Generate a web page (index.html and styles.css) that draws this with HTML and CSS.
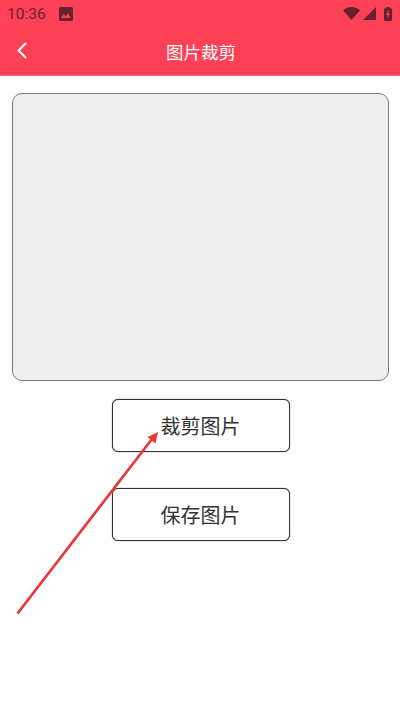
FILE: index.html
```html
<html>

<head>

	<title>图片裁剪</title>

	<link rel="stylesheet" href="styles.css">

</head>

<body>

	<div class="statusBar">
		<span class="clock">10:36</span>
		<svg class="picIcon" width="14" height="14" viewBox="0 0 14 14">
			<path fill="#66222e" d="M1.500 0h11A1.500 1.500 0 0 1 14 1.500v11a1.500 1.500 0 0 1-1.500 1.500h-11A1.500 1.500 0 0 1 0 12.500v-11A1.500 1.500 0 0 1 1.500 0z"/>
			<path fill="#ff4157" d="M2 11l2.800-4 2 2.200L9 6.300 12 11z"/>
		</svg>
		<span class="spacer"></span>
		<svg class="wifiIcon" width="17" height="13" viewBox="0 0 17 13">
			<path fill="#66222e" d="M0 3.400C2.200 1.300 5.100 0 8.500 0S14.800 1.300 17 3.400L8.500 13z"/>
		</svg>
		<svg class="signalIcon" width="13" height="13" viewBox="0 0 13 13">
			<path fill="#66222e" d="M13 0v13H0z"/>
		</svg>
		<svg class="batteryIcon" width="8" height="14" viewBox="0 0 8 14">
			<path fill="#66222e" d="M2.500 0h3v1.300H7a1 1 0 0 1 1 1V13a1 1 0 0 1-1 1H1a1 1 0 0 1-1-1V2.300a1 1 0 0 1 1-1h1.500z"/>
			<path fill="#ff4157" d="M4.600 2.800L2 8h1.700v3.400L6 6.400H4.400z"/>
		</svg>
	</div>

	<div class="titleBar">
		<svg class="backIcon" width="12" height="18" viewBox="0 0 12 18">
			<path fill="none" stroke="#ffffff" stroke-width="2" d="M10 2L2.500 9.500l7.500 7.500"/>
		</svg>
		<span class="title">图片裁剪</span>
	</div>

	<div class="content">
		<div class="preview"></div>
		<button class="btn cropBtn">裁剪图片</button>
		<button class="btn">保存图片</button>
	</div>

	<!-- arrow drawn over the page -->
	<svg class="arrow" width="400" height="711" viewBox="0 0 400 711">
		<line x1="17.500" y1="613.500" x2="152" y2="439" stroke="#e53838" stroke-width="2.700"/>
		<path fill="#e53838" d="M158 432l-2.500 11.500-8-6.500z"/>
	</svg>

</body>

</html>
```

FILE: styles.css
```css
body {
	margin: 0;
	width: 400px;
	height: 711px;
	overflow: hidden;
	position: relative;
	background-color: #ffffff;
	font-family: "Noto Sans CJK SC", "Roboto", sans-serif;
}
.statusBar {
	height: 27px;
	padding: 0 8px 0 7px;
	display: flex;
	align-items: center;
	background-color: #ff4157;
}
.clock {
	width: 52px;
	font-family: "Roboto", sans-serif;
	font-size: 15.500px;
	color: #66222e;
}
.spacer {
	flex: 1;
}
.signalIcon {
	margin-left: 3px;
	margin-right: 8px;
}
.titleBar {
	height: 49px;
	position: relative;
	display: flex;
	align-items: center;
	justify-content: center;
	background-color: #ff4157;
	border-bottom: 1px solid #f2707f;
	box-sizing: border-box;
}
.backIcon {
	position: absolute;
	left: 16px;
	top: 14px;
}
.title {
	font-size: 17.500px;
	margin-left: 2px;
	color: #ffffff;
}
.content {
	padding: 17px 11px 0 12px;
	display: flex;
	flex-direction: column;
	align-items: center;
}
.preview {
	width: 100%;
	height: 288px;
	box-sizing: border-box;
	background-color: #eeeeee;
	border: 1px solid #777777;
	border-radius: 10px;
}
.btn {
	width: 178px;
	height: 53px;
	margin-top: 36px;
	padding: 0;
	box-sizing: border-box;
	background-color: #ffffff;
	border: 1px solid #333333;
	box-shadow: 0 0 1px #333333;
	border-radius: 6px;
	font-family: "Noto Sans CJK SC", sans-serif;
	font-size: 20px;
	color: #333333;
}
.cropBtn {
	margin-top: 18px;
}
.arrow {
	position: absolute;
	left: 0;
	top: 0;
}
```
